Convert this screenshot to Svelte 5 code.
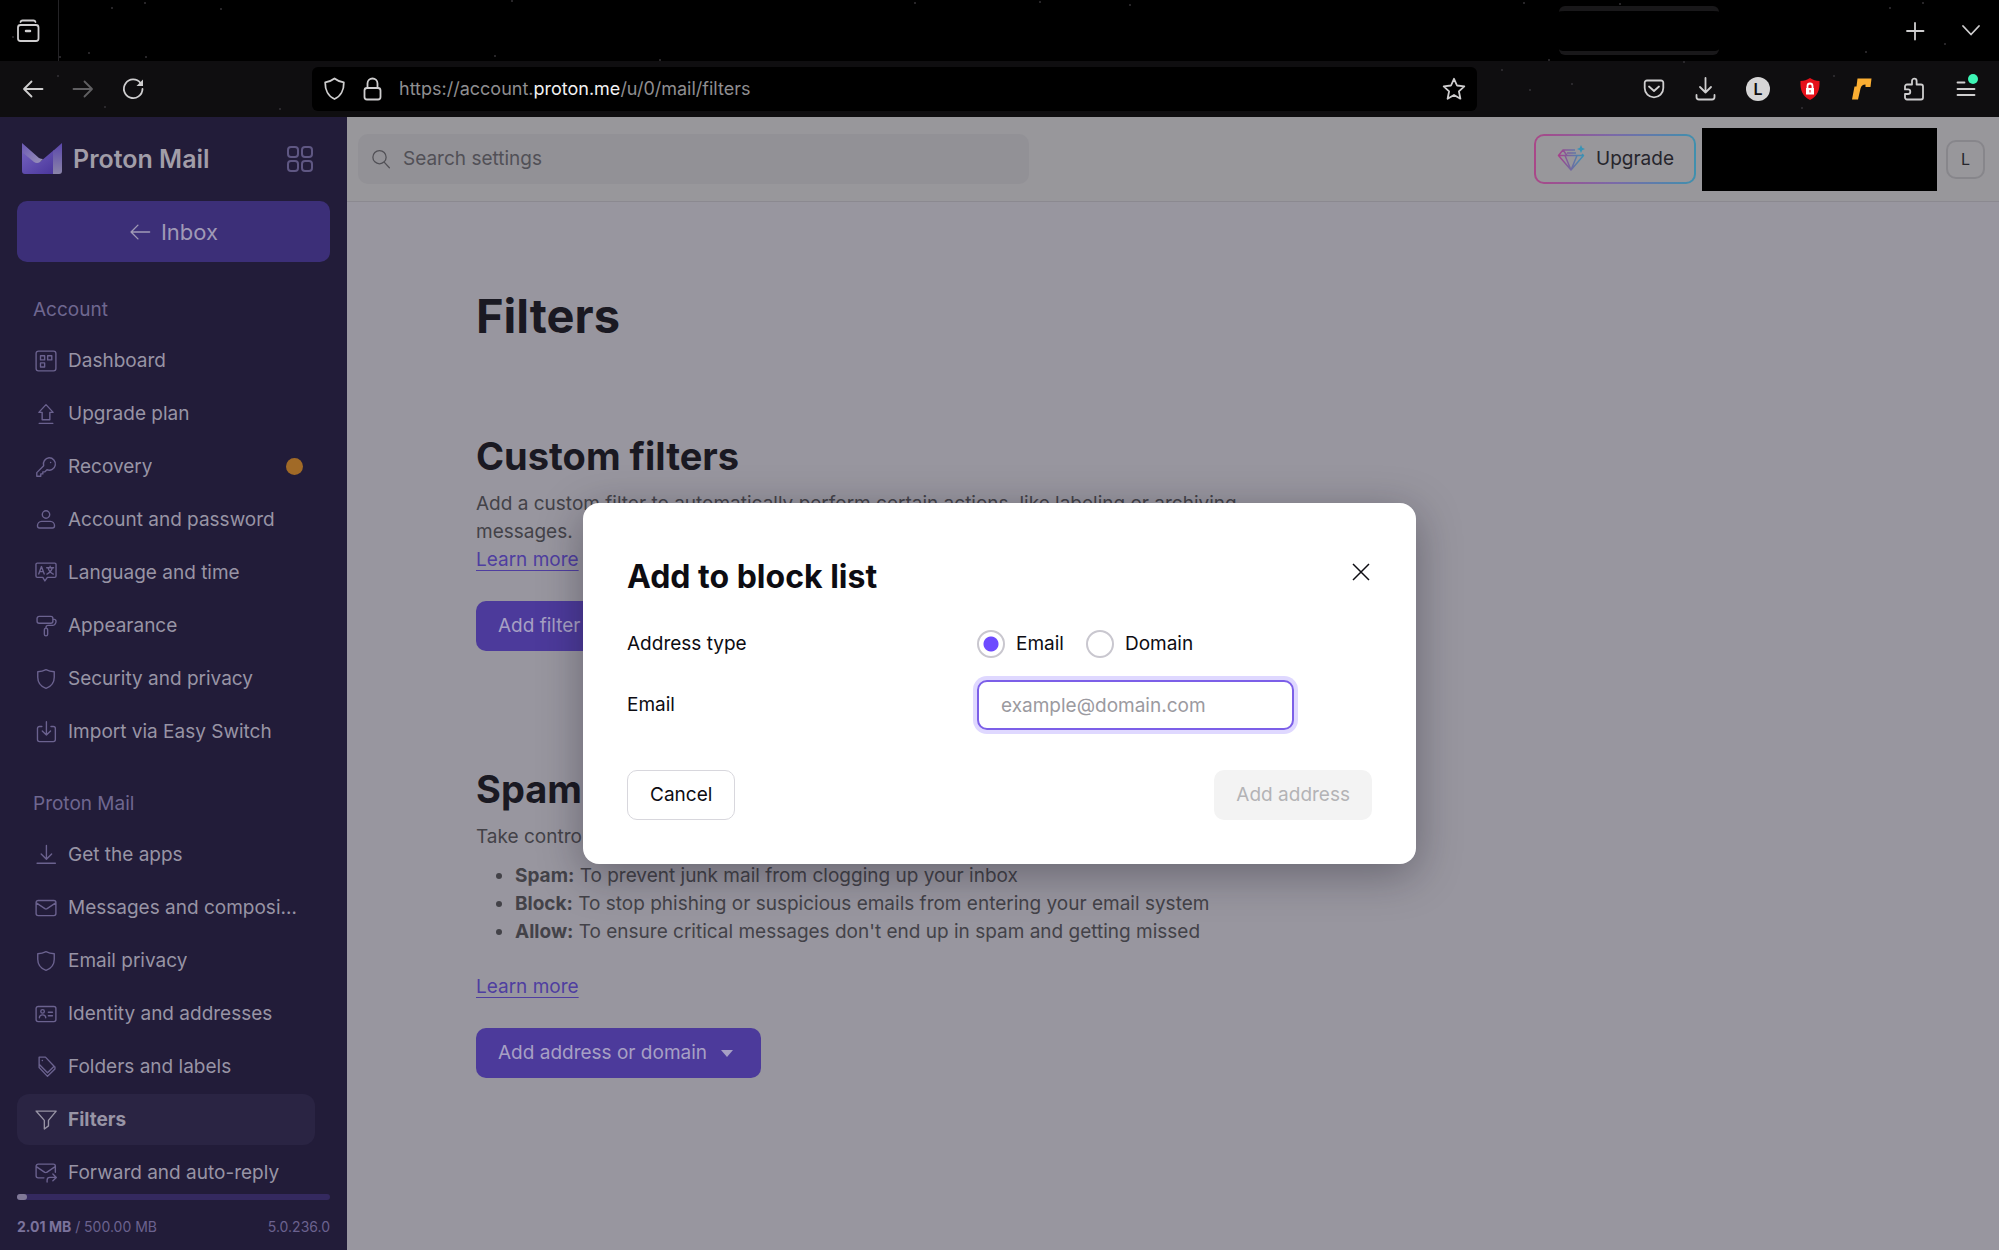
<script lang="ts">
	type NavItem = { label: string; icon: string; badge?: boolean; active?: boolean };

	const sections: { title: string; items: NavItem[] }[] = [
		{
			title: 'Account',
			items: [
				{ label: 'Dashboard', icon: 'dashboard' },
				{ label: 'Upgrade plan', icon: 'upgrade' },
				{ label: 'Recovery', icon: 'key', badge: true },
				{ label: 'Account and password', icon: 'user' },
				{ label: 'Language and time', icon: 'language' },
				{ label: 'Appearance', icon: 'roller' },
				{ label: 'Security and privacy', icon: 'shield' },
				{ label: 'Import via Easy Switch', icon: 'import' }
			]
		},
		{
			title: 'Proton Mail',
			items: [
				{ label: 'Get the apps', icon: 'download' },
				{ label: 'Messages and composing', icon: 'envelope' },
				{ label: 'Email privacy', icon: 'shield' },
				{ label: 'Identity and addresses', icon: 'card' },
				{ label: 'Folders and labels', icon: 'tags' },
				{ label: 'Filters', icon: 'funnel', active: true },
				{ label: 'Forward and auto-reply', icon: 'forward' }
			]
		}
	];

	// 16px grid, stroked
	const icons: Record<string, string> = {
		dashboard: 'M2.5.8h11a1.7 1.7 0 0 1 1.7 1.7v11a1.7 1.7 0 0 1-1.7 1.7h-11A1.7 1.7 0 0 1 .8 13.5v-11A1.7 1.7 0 0 1 2.5.8zM4 4.2h3v3H4zM9.2 4.2h3v3h-3zM4 9.4h3v3H4z',
		upgrade: 'M8 1.2 2.8 6.8h2.4v5.4h5.6V6.8h2.4zM3 14.8h10',
		key: 'M10.2 1.3a4.5 4.5 0 1 1-1.5 8.7L7.2 11.5H5.7V13H4.2v1.7H1.3v-2.6l5-5a4.5 4.5 0 0 1 3.9-5.8zM11.3 4.7h.1',
		user: 'M8 1.3a2.7 2.7 0 1 1 0 5.4 2.7 2.7 0 0 1 0-5.4zM4.8 9h6.4c1.7 0 3 1.5 3 3.2 0 1-.7 1.6-1.5 1.6H3.3c-.8 0-1.5-.6-1.5-1.6C1.8 10.5 3.1 9 4.8 9z',
		language: 'M1.7.8h12.6a1 1 0 0 1 1 1v8.4a1 1 0 0 1-1 1H9l-1.8 2.6-1.5-2.6h-4a1 1 0 0 1-1-1V1.8a1 1 0 0 1 1-1zM2.7 8.7 4.7 3.3l2 5.4M3.4 7h2.7M8.5 4.2h5M11 3v1.2M12.6 4.2C12 6.5 10.5 8 8.7 8.8M9.5 4.3c.6 2.2 2 3.7 3.8 4.5',
		roller: 'M3 1h8.5a1.5 1.5 0 0 1 1.5 1.5v2A1.5 1.5 0 0 1 11.5 6H3a1.5 1.5 0 0 1-1.5-1.5v-2A1.5 1.5 0 0 1 3 1zM13 3c1.5 0 2.3.4 2.3 1.5S14.5 7.5 13 7.5H9.5C8.5 7.5 8 7.9 8 9v.5M8 9.5c.8 0 1.2.6 1.2 1.5v3c0 .8-.4 1.2-1.2 1.2s-1.2-.4-1.2-1.2v-3c0-.9.4-1.5 1.2-1.5z',
		shield: 'M8 1.2c2 1 4 1.4 6 1.5v4c0 4-2.5 6.8-6 8.1-3.5-1.3-6-4.1-6-8.1v-4c2-.1 4-.5 6-1.5z',
		import: 'M5 4H3.3A1.5 1.5 0 0 0 1.8 5.5v8A1.5 1.5 0 0 0 3.3 15h10a1.5 1.5 0 0 0 1.5-1.5v-8A1.5 1.5 0 0 0 13.3 4h-1.7M8.3.5v9.7M5.3 7.2l3 3 3-3',
		download: 'M8.3 1v10M4.5 7.3l3.8 3.8 3.8-3.8M1.5 14h13.3',
		envelope: 'M2.3 2.5h11.4a1.5 1.5 0 0 1 1.5 1.5v8a1.5 1.5 0 0 1-1.5 1.5H2.3A1.5 1.5 0 0 1 .8 12V4a1.5 1.5 0 0 1 1.5-1.5zM1.2 4.5l6 4q.8.5 1.6 0l6-4',
		card: 'M2.3 2.5h11.4a1.5 1.5 0 0 1 1.5 1.5v8a1.5 1.5 0 0 1-1.5 1.5H2.3A1.5 1.5 0 0 1 .8 12V4a1.5 1.5 0 0 1 1.5-1.5zM5.5 4.8a1.3 1.3 0 1 1 0 2.6 1.3 1.3 0 0 1 0-2.6zM3.2 10.8c0-1.3 1-2.2 2.3-2.2s2.3.9 2.3 2.2M9.7 6.7h3M9.7 9.3h3',
		tags: 'M3 .8h4.6l6.3 6.6-4.8 4.8L3 6zM5.3 3.3h.1M3 6v2.3l6.1 6.5 5.4-5.3V7.9',
		funnel: 'M.8 1.5h14.6L9.8 8.3v4l-3 2.2V8.3z',
		forward: 'M6.5 11.5H2.3A1.5 1.5 0 0 1 .8 10V3a1.5 1.5 0 0 1 1.5-1.5h11A1.5 1.5 0 0 1 14.8 3v4.5M1.2 3.5l5.9 4q.7.5 1.4 0l5.9-4M8.8 14.5v-1.3c0-1.2.8-2 2-2h4.5M13 8.7l2.5 2.5-2.5 2.5',
		search: 'M6.8 1.2a5.3 5.3 0 1 1 0 10.6 5.3 5.3 0 0 1 0-10.6zM10.5 10.5 14.7 15',
		back: 'M15 8H1.5M6.5 3l-5 5 5 5'
	};

	const rules = [
		{ name: 'Spam:', text: 'To prevent junk mail from clogging up your inbox' },
		{ name: 'Block:', text: 'To stop phishing or suspicious emails from entering your email system' },
		{ name: 'Allow:', text: "To ensure critical messages don't end up in spam and getting missed" }
	];

	const stars = [
		[112, 8], [145, 3], [221, 9], [13, 37], [60, 57], [89, 53], [146, 57], [495, 56], [660, 60], [512, 1],
		[915, 3], [1040, 2], [1130, 5], [1524, 3], [1620, 4], [1890, 8], [1923, 3], [1945, 44], [1866, 52],
		[1549, 60], [1684, 62], [58, 76], [105, 107], [280, 109], [1572, 84], [1530, 90], [1502, 70], [1834, 76], [1802, 108]
	];

	let addressType = $state('email');
	let email = $state('');
</script>

{#snippet icon(name: string, size = 22)}
	<svg class="icon" width={size} height={size} viewBox="0 0 16 16" aria-hidden="true">
		<path d={icons[name]} />
	</svg>
{/snippet}

<div class="window">
	<header class="chrome">
		<svg class="stars" aria-hidden="true">
			{#each stars as [x, y]}
				<circle cx={x} cy={y} r="1" />
			{/each}
		</svg>
		<div class="tabs">
			<button class="view" aria-label="Recent browsing">
				<svg width="24" height="24" viewBox="0 0 24 24">
					<path d="M4.5 3c.3-1 1-1.5 2-1.5h11c1 0 1.7.5 2 1.5" />
					<rect x="2" y="6" width="20.5" height="16" rx="2.5" />
					<path d="M10 12h4" stroke-width="2.5" />
				</svg>
			</button>
			<div class="tab"></div>
			<button class="tool" aria-label="New tab">
				<svg width="24" height="24" viewBox="0 0 24 24"><path d="M12 4v16.500M4 12h16.500" /></svg>
			</button>
			<button class="tool" aria-label="List all tabs">
				<svg width="24" height="24" viewBox="0 0 24 24"><path d="m4 7 8 8.500L20 7" /></svg>
			</button>
		</div>
		<div class="toolbar">
			<div class="history">
				<button class="tool" aria-label="Back">
					<svg width="24" height="24" viewBox="0 0 24 24"><path d="M21.500 12H3.500M10.500 4.500 3 12l7.500 7.500" /></svg>
				</button>
				<button class="tool dim" aria-label="Forward">
					<svg width="24" height="24" viewBox="0 0 24 24"><path d="M2.500 12h18M13.500 4.500 21 12l-7.500 7.500" /></svg>
				</button>
				<button class="tool" aria-label="Reload">
					<svg width="24" height="24" viewBox="0 0 24 24">
						<path d="M19.500 6A9.300 9.300 0 1 0 21.500 12" />
						<path class="solid" d="M22 2.500v6.500h-6.500z" />
					</svg>
				</button>
			</div>
			<div class="address">
				<svg width="24" height="24" viewBox="0 0 24 24"><path d="M11.500 1.500c2.500 2 5.500 3.200 9.300 3.900C21 13 17.500 19.500 11.500 22 5.500 19.500 2 13 2.200 5.400 6 4.700 9 3.500 11.500 1.500z" /></svg>
				<svg width="24" height="24" viewBox="0 0 24 24">
					<rect x="3.5" y="11" width="16" height="11.5" rx="2.5" />
					<path d="M6.500 11V6.500a5 5 0 0 1 10 0V11" />
				</svg>
				<span class="url">https://account.<b>proton.me</b>/u/0/mail/filters</span>
				<svg width="24" height="24" viewBox="0 0 24 24"><path d="m12 1.800 3 6.700 7.300.8-5.400 5 1.500 7.400-6.400-3.800-6.400 3.800 1.500-7.400-5.400-5 7.300-.8z" /></svg>
			</div>
			<div class="extensions">
				<svg width="24" height="24" viewBox="0 0 24 24">
					<path d="M5 3.500h14a2.300 2.300 0 0 1 2.300 2.300V11a9.300 9.300 0 0 1-18.600 0V5.800A2.300 2.300 0 0 1 5 3.500z" />
					<path d="m7 9.500 5 4.500 5-4.500" />
				</svg>
				<svg width="24" height="24" viewBox="0 0 24 24"><path d="M11.500 1v14.500M6 10l5.500 5.500L17 10M2.500 18v2a2.500 2.500 0 0 0 2.500 2.500h13a2.500 2.500 0 0 0 2.500-2.500v-2" /></svg>
				<span class="profile">L</span>
				<svg width="24" height="24" viewBox="0 0 24 24">
					<path class="blocker" d="M12 1c3 2 6 2.700 9.500 3C22 13 19.500 19.500 12 23 4.500 19.500 2 13 2.500 4 6 3.700 9 3 12 1z" />
					<path class="padlock" d="M8 11h8v6.500H8z" />
					<path class="shackle" d="M9.500 11V9a2.500 2.500 0 0 1 5 0v2" />
					<path class="blocker" d="M11.500 13h1v2.500h-1z" />
				</svg>
				<svg width="24" height="24" viewBox="0 0 24 24">
					<path class="rewards" d="M7.500 1.500H21.500L20.500 10h-5V7.500q-4 0-5 4L8 22.500H2L4.500 9.500H6.500z" />
				</svg>
				<svg width="24" height="24" viewBox="0 0 24 24"><path d="M10 7.500V4a2.300 2.300 0 0 1 4.600 0v3.500H19a2 2 0 0 1 2 2v11a2 2 0 0 1-2 2H5a2 2 0 0 1-2-2V17h3a2.300 2.300 0 0 0 0-4.600H3V9.500a2 2 0 0 1 2-2z" /></svg>
				<svg width="24" height="24" viewBox="0 0 24 24">
					<path d="M3.500 5.500h7M3.500 12h17M3.500 18h17" />
					<circle class="notice" cx="19" cy="2" r="5" />
				</svg>
			</div>
		</div>
	</header>

	<div class="page">
		<aside class="sidebar">
			<div class="brand">
				<svg width="42" height="32" viewBox="0 0 42 32" aria-hidden="true">
					<defs>
						<linearGradient id="flap" x1="0" y1="0" x2="1" y2="1">
							<stop offset="0" stop-color="#6a58b4" />
							<stop offset="1" stop-color="#9a93b8" />
						</linearGradient>
						<linearGradient id="fold" x1="0" y1="0" x2="1" y2="1">
							<stop offset="0" stop-color="#7462be" />
							<stop offset="1" stop-color="#4a369c" />
						</linearGradient>
						<linearGradient id="side" x1="0" y1="1" x2="0" y2="0">
							<stop offset="0" stop-color="#8a84a8" />
							<stop offset="1" stop-color="#5a46ac" />
						</linearGradient>
					</defs>
					<path d="M1 8v20q0 3 3 3h29V7L20 18q-3 2-6 0z" fill="url(#fold)" />
					<path d="M1 0v9l12 10q3 2 6 0l3-3q-2 0-4-1z" fill="url(#flap)" />
					<path d="M41 0 32 8v23h6q3 0 3-3z" fill="url(#side)" />
				</svg>
				<span class="wordmark">Proton Mail</span>
				<button class="apps" aria-label="Proton applications">
					<svg width="28" height="28" viewBox="0 0 28 28">
						<rect x="2" y="2" width="10" height="10" rx="3" />
						<rect x="16" y="2" width="10" height="10" rx="3" />
						<rect x="2" y="16" width="10" height="10" rx="3" />
						<rect x="16" y="16" width="10" height="10" rx="3" />
					</svg>
				</button>
			</div>

			<a class="inbox" href="#inbox">{@render icon('back')}Inbox</a>

			<nav>
				{#each sections as section}
					<section>
						<h3>{section.title}</h3>
						<ul>
							{#each section.items as item}
								<li>
									<a href="#{item.icon}" class:active={item.active}>
										{@render icon(item.icon)}
										<span>{item.label}</span>
										{#if item.badge}<i class="dot"></i>{/if}
									</a>
								</li>
							{/each}
						</ul>
					</section>
				{/each}
			</nav>

			<footer>
				<div class="meter"><div class="used"></div></div>
				<div class="storage">
					<span><b>2.01 MB</b> / 500.00 MB</span>
					<span>5.0.236.0</span>
				</div>
			</footer>
		</aside>

		<main>
			<div class="topbar">
				<label class="search">
					{@render icon('search', 20)}
					<input type="search" placeholder="Search settings" aria-label="Search settings" />
				</label>
				<div class="account">
					<button class="upgrade">
						<svg width="28" height="28" viewBox="0 0 28 28" aria-hidden="true">
							<defs>
								<linearGradient id="gem" x1="0" y1="0" x2="1" y2="0">
									<stop offset="0" stop-color="#a83f8b" />
									<stop offset="1" stop-color="#3a93b5" />
								</linearGradient>
							</defs>
							<g fill="none" stroke="url(#gem)" stroke-width="1.5" stroke-linejoin="round">
								<path d="M18 5H6l-4.500 5.500L14 25l12.500-14.500L25 9M1.500 10.500h25M8 10.500 14 25l6-14.500M6 5l4 5.500M10 8h9" />
							</g>
							<path d="m24 0 1.200 2.800L28 4l-2.800 1.200L24 8l-1.200-2.800L20 4l2.800-1.200z" fill="#3a93b5" />
						</svg>
						Upgrade
					</button>
					<div class="redacted"></div>
					<button class="avatar" aria-label="Account menu">L</button>
				</div>
			</div>

			<div class="content">
				<h1>Filters</h1>
				<section>
					<h2>Custom filters</h2>
					<p>Add a custom filter to automatically perform certain actions, like labeling or archiving messages.</p>
					<a class="learn" href="#custom">Learn more</a>
					<div class="actions"><button class="primary">Add filter</button></div>
				</section>
				<section class="spam">
					<h2>Spam</h2>
					<p>Take control over what lands in your inbox by creating the following lists:</p>
					<ul>
						{#each rules as rule}
							<li><b>{rule.name}</b> {rule.text}</li>
						{/each}
					</ul>
					<a class="learn" href="#spam">Learn more</a>
					<div class="actions">
						<button class="primary">
							Add address or domain
							<svg width="12" height="7" viewBox="0 0 12 7" aria-hidden="true"><path d="M0 0h12L6 7z" fill="currentColor" /></svg>
						</button>
					</div>
				</section>
			</div>
		</main>

		<div class="backdrop">
			<form class="modal" role="dialog" aria-labelledby="modal-title" onsubmit={(e) => e.preventDefault()}>
				<div class="modal-head">
					<h2 id="modal-title">Add to block list</h2>
					<button type="button" class="close" aria-label="Close">
						<svg width="22" height="22" viewBox="0 0 22 22"><path d="m3 3 16 16M19 3 3 19" /></svg>
					</button>
				</div>
				<div class="row">
					<span id="type-label">Address type</span>
					<div class="radios" role="radiogroup" aria-labelledby="type-label">
						<label><input type="radio" name="type" value="email" bind:group={addressType} />Email</label>
						<label><input type="radio" name="type" value="domain" bind:group={addressType} />Domain</label>
					</div>
				</div>
				<div class="row">
					<label for="address">Email</label>
					<input id="address" type="text" placeholder="example@domain.com" bind:value={email} />
				</div>
				<div class="modal-foot">
					<button type="button" class="cancel">Cancel</button>
					<button type="submit" class="submit" disabled={!email}>Add address</button>
				</div>
			</form>
		</div>
	</div>
</div>

<style>
	:global(body) {
		background: #000;
	}

	.window {
		height: 100vh;
		display: flex;
		flex-direction: column;
		overflow: hidden;
		font-family: Inter, 'Liberation Sans', sans-serif;
		font-size: 19px;
		line-height: 28px;
	}

	.window :global(*) {
		box-sizing: border-box;
	}

	button,
	input {
		font: inherit;
		color: inherit;
		margin: 0;
	}

	button {
		padding: 0;
		border: 0;
		background: none;
		cursor: pointer;
	}

	h1,
	h2,
	h3,
	p,
	ul {
		margin: 0;
		padding: 0;
	}

	svg {
		display: block;
		flex: none;
	}

	.icon {
		fill: none;
		stroke: currentColor;
		stroke-width: 1;
		stroke-linejoin: round;
		stroke-linecap: round;
	}

	/* browser chrome */
	.chrome {
		position: relative;
		flex: none;
		color: #cfcecf;
		background: #000;
	}

	.chrome svg {
		fill: none;
		stroke: currentColor;
		stroke-width: 1.8;
		stroke-linejoin: round;
		stroke-linecap: round;
	}

	.chrome .stars {
		position: absolute;
		inset: 0;
		width: 100%;
		height: 100%;
		fill: #343236;
		stroke: none;
		pointer-events: none;
	}

	.chrome .solid {
		fill: currentColor;
		stroke: none;
	}

	.blocker {
		fill: #e5101a;
		stroke: none;
	}

	.padlock {
		fill: #fff;
		stroke: none;
	}

	.shackle {
		stroke: #fff;
	}

	.rewards {
		fill: #fbae32;
		stroke: none;
	}

	.notice {
		fill: #3df5b5;
		stroke: none;
	}

	.tabs {
		display: flex;
		align-items: center;
		gap: 32px;
		height: 61px;
		padding-right: 16px;
	}

	.view {
		align-self: stretch;
		width: 59px;
		padding: 0 19px 0 16px;
		border-right: 1px solid #242326;
	}

	.tab {
		width: 160px;
		height: 49px;
		margin: 0 152px 0 auto;
		border-top: 5px solid #19181a;
		border-bottom: 4px solid #19181a;
		border-radius: 6px;
	}

	.tool {
		display: flex;
	}

	.tool.dim {
		color: #605f62;
	}

	.toolbar {
		display: flex;
		align-items: center;
		height: 56px;
		padding: 0 21px;
		background: #0f0e10;
	}

	.history {
		display: flex;
		gap: 26px;
		width: 291px;
	}

	.address {
		display: flex;
		align-items: center;
		flex: 0 1 1165px;
		gap: 14px;
		height: 44px;
		padding: 0 11px;
		border-radius: 6px;
		background: #000;
	}

	.url {
		flex: 1;
		font-size: 18px;
		color: #8f8e90;
	}

	.url b {
		font-weight: 400;
		color: #f2f2f2;
	}

	.extensions {
		display: flex;
		align-items: center;
		gap: 28px;
		margin-left: auto;
	}

	.profile {
		width: 24px;
		height: 24px;
		border-radius: 50%;
		background: #d6d5d6;
		color: #0f0e10;
		font-size: 16px;
		font-weight: 600;
		line-height: 24px;
		text-align: center;
	}

	.extensions svg {
		overflow: visible;
	}

	/* page */
	.page {
		position: relative;
		flex: 1;
		min-height: 0;
		display: flex;
		background: #98969f;
	}

	.sidebar {
		flex: none;
		width: 347px;
		display: flex;
		flex-direction: column;
		background: #221c39;
		color: #9894a5;
	}

	.brand {
		display: flex;
		align-items: center;
		height: 84px;
		padding: 0 33px 0 21px;
	}

	.wordmark {
		margin-left: 10px;
		font-size: 25px;
		font-weight: 600;
		color: #a19da8;
	}

	.apps {
		margin-left: auto;
		color: #5f5783;
	}

	.apps svg {
		fill: none;
		stroke: currentColor;
		stroke-width: 2;
	}

	.inbox {
		flex: none;
		display: flex;
		align-items: center;
		justify-content: center;
		gap: 10px;
		height: 61px;
		margin: 0 17px;
		border-radius: 10px;
		background: #3c2f78;
		color: #a09ab6;
		font-size: 22px;
		text-decoration: none;
	}

	nav {
		flex: 1;
		min-height: 0;
		overflow: hidden;
		padding: 19px 32px 0 17px;
	}

	nav section + section {
		margin-top: 17px;
	}

	nav h3 {
		padding: 4px 0 0 16px;
		font-size: 19px;
		font-weight: 400;
		line-height: 49px;
		color: #6f6790;
	}

	nav ul {
		list-style: none;
	}

	nav li {
		padding: 1px 0;
	}

	nav a {
		display: flex;
		align-items: center;
		gap: 11px;
		height: 51px;
		padding: 0 12px 0 18px;
		border-radius: 12px;
		color: inherit;
		text-decoration: none;
	}

	nav a .icon {
		color: #6b628f;
	}

	nav a span {
		overflow: hidden;
		white-space: nowrap;
		text-overflow: ellipsis;
	}

	nav a.active {
		background: #2a2443;
		font-weight: 700;
	}

	nav a.active .icon {
		color: #9894a5;
	}

	.dot {
		flex: none;
		width: 17px;
		height: 17px;
		margin-left: auto;
		border-radius: 50%;
		background: #a16a27;
	}

	footer {
		padding: 0 17px 13px;
	}

	.meter {
		height: 6px;
		border-radius: 3px;
		background: #34295f;
	}

	.used {
		width: 10px;
		height: 6px;
		border-radius: 3px;
		background: #807997;
	}

	.storage {
		display: flex;
		justify-content: space-between;
		padding-top: 17px;
		font-size: 14px;
		line-height: 20px;
		color: #6b628f;
	}

	.storage b {
		color: #7b739c;
	}

	main {
		flex: 1;
		min-width: 0;
	}

	.topbar {
		display: flex;
		align-items: center;
		justify-content: space-between;
		height: 85px;
		padding: 0 14px 0 11px;
		border-bottom: 1px solid #8b8990;
		background: #98979b;
	}

	.search {
		display: flex;
		align-items: center;
		gap: 12px;
		flex: 0 1 671px;
		height: 50px;
		padding: 0 13px;
		border-radius: 10px;
		background: #929196;
		color: #515056;
	}

	.search input {
		flex: 1;
		min-width: 0;
		padding: 0;
		border: 0;
		outline: 0;
		background: none;
	}

	.search input::placeholder {
		color: #515056;
		opacity: 1;
	}

	.account {
		display: flex;
		align-items: center;
	}

	.upgrade {
		display: flex;
		align-items: center;
		gap: 11px;
		height: 50px;
		padding: 0 20px 0 21px;
		border: 2px solid transparent;
		border-radius: 10px;
		background:
			linear-gradient(#98979b, #98979b) padding-box,
			linear-gradient(90deg, #a94888, #7a6aa8 50%, #3f90ae) border-box;
		color: #26252c;
	}

	.redacted {
		width: 235px;
		height: 63px;
		margin: 0 9px 0 6px;
		background: #000;
	}

	.avatar {
		width: 39px;
		height: 39px;
		border: 2px solid #87868b;
		border-radius: 10px;
		color: #26252c;
		font-size: 16px;
	}

	.content {
		max-width: 929px;
		padding: 84px 0 0 129px;
		color: #434248;
	}

	.content h1 {
		margin-bottom: 86px;
		font-size: 47px;
		line-height: 60px;
		color: #1a1922;
	}

	.content h2 {
		margin-bottom: 10px;
		font-size: 38px;
		line-height: 48px;
		color: #1a1922;
	}

	.learn {
		color: #4f3ea0;
		text-underline-offset: 4px;
		text-decoration-thickness: 1px;
	}

	.actions {
		display: flex;
		padding-top: 27px;
	}

	.primary {
		display: flex;
		align-items: center;
		gap: 14px;
		height: 50px;
		padding: 0 22px;
		border-radius: 10px;
		background: #4c3a9b;
		color: #a7a0c4;
	}

	.primary svg {
		margin-right: 6px;
	}

	.spam {
		margin-top: 114px;
	}

	.content ul {
		margin: 11px 0 27px;
		padding-left: 39px;
	}

	/* modal */
	.backdrop {
		position: absolute;
		inset: 0;
		display: flex;
		align-items: center;
		justify-content: center;
	}

	.modal {
		width: 833px;
		max-width: 90%;
		padding: 44px;
		border-radius: 16px;
		background: #fff;
		box-shadow: 0 10px 44px rgba(20, 18, 30, 0.36);
		color: #0d0c12;
	}

	.modal-head {
		display: flex;
		align-items: flex-start;
		justify-content: space-between;
		margin-bottom: 20px;
	}

	.modal-head h2 {
		padding-top: 8px;
		font-size: 32px;
		line-height: 44px;
	}

	.close {
		display: flex;
		padding: 14px 0;
	}

	.close svg {
		fill: none;
		stroke: currentColor;
		stroke-width: 1.5;
	}

	.row {
		display: grid;
		grid-template-columns: 350px 317px;
		align-items: center;
		min-height: 50px;
		margin-bottom: 11px;
	}

	.radios {
		display: flex;
		gap: 22px;
	}

	.radios label {
		display: flex;
		align-items: center;
		gap: 11px;
	}

	.radios input {
		appearance: none;
		width: 28px;
		height: 28px;
		border: 2px solid #c9c7cf;
		border-radius: 50%;
		background: #fff;
	}

	.radios input:checked {
		background: radial-gradient(circle, #6d4aff 7px, #fff 8px);
	}

	#address {
		width: 100%;
		height: 50px;
		padding: 0 22px;
		border: 2px solid #7c5fe8;
		border-radius: 10px;
		outline: 0;
		box-shadow: 0 0 0 4px #dfd8ff;
	}

	#address::placeholder {
		color: #9b9a9f;
		opacity: 1;
	}

	.modal-foot {
		display: flex;
		justify-content: space-between;
		margin-top: 40px;
	}

	.modal-foot button {
		height: 50px;
		padding: 0 22px;
		border-radius: 10px;
	}

	.modal-foot .cancel {
		border: 1px solid #d8d7dd;
	}

	.modal-foot .submit {
		background: #f3f3f3;
		color: #b4b3b6;
	}
</style>
